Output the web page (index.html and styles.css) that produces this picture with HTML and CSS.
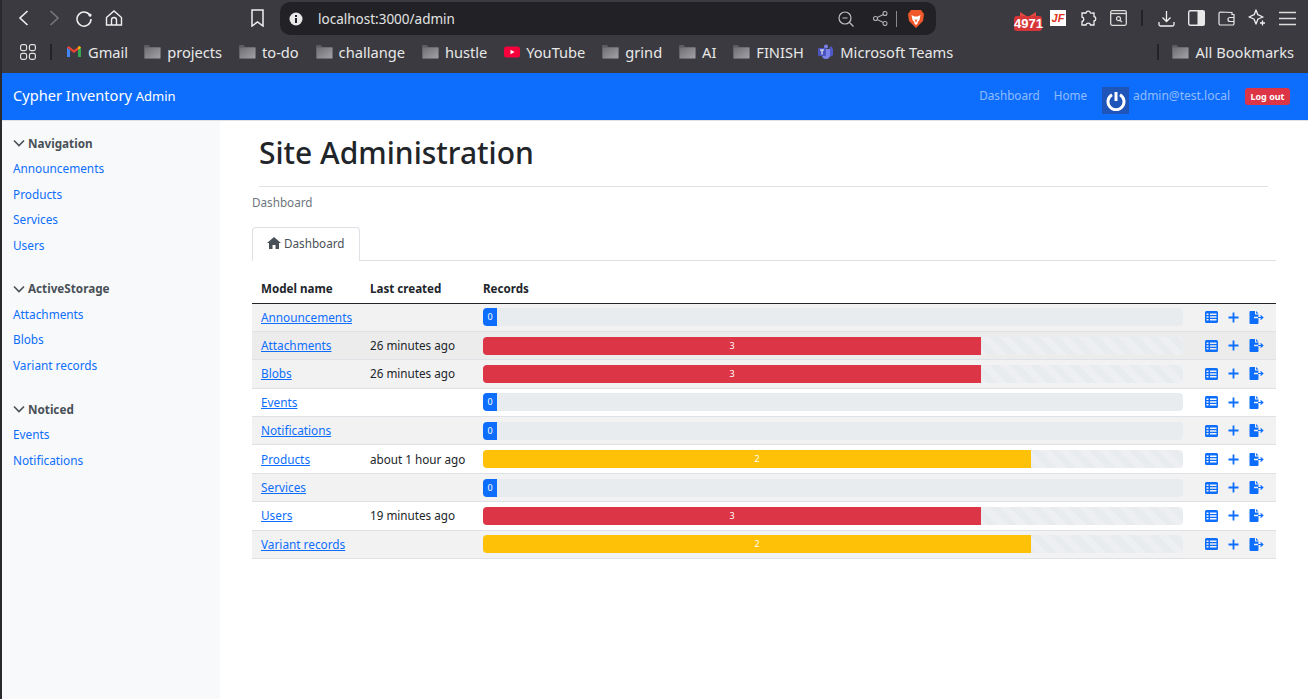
FILE: index.html
```html
<!DOCTYPE html>
<html lang="en">
<head>
<meta charset="utf-8">
<title>Site Administration</title>
<link rel="stylesheet" href="styles.css">
</head>
<body>
<svg class="defs" width="0" height="0" aria-hidden="true">
  <defs><linearGradient id="fg" x1="0" y1="0" x2="1" y2="1"><stop offset="0" stop-color="#6e6e73"/><stop offset="1" stop-color="#a2a2a6"/></linearGradient></defs>
  <symbol id="folder" viewBox="0 0 17 14"><path d="M0 1a1 1 0 0 1 1-1h4l1 2h10a1 1 0 0 1 1 1v10a1 1 0 0 1-1 1H1a1 1 0 0 1-1-1z" fill="#5c5c61"/><rect x=".7" y="2.500" width="15.600" height="10.800" rx=".8" fill="url(#fg)"/></symbol>
  <symbol id="tbl" viewBox="0 0 13 12"><path fill-rule="evenodd" d="M1.500 0h10A1.500 1.500 0 0 1 13 1.500v9a1.500 1.500 0 0 1-1.500 1.500h-10A1.500 1.500 0 0 1 0 10.500v-9A1.500 1.500 0 0 1 1.500 0zM1.500 2.500v1.500h2V2.500zM5 2.500v1.500h6.500V2.500zM1.500 5.200v1.600h2V5.200zM5 5.200v1.600h6.500V5.200zM1.500 8v1.500h2V8zM5 8v1.500h6.500V8z" fill="#0d6efd"/></symbol>
  <symbol id="plus" viewBox="0 0 11 11"><path d="M5.500 0.500v10M0.500 5.500h10" stroke="#0d6efd" stroke-width="1.800" fill="none"/></symbol>
  <symbol id="exp" viewBox="0 0 15 13"><path d="M0.500 1a1 1 0 0 1 1-1H6v3.500h3.500V5.700H5V7.300H9.500V12a1 1 0 0 1-1 1h-7a1 1 0 0 1-1-1z" fill="#0d6efd"/><path d="M7 0l2.500 2.500H7z" fill="#0d6efd"/><path d="M9 6.500h4.500M11.500 4.500l2.300 2-2.300 2" stroke="#0d6efd" stroke-width="1.200" fill="none"/></symbol>
  <symbol id="chev" viewBox="0 0 12 8"><path d="M1 1.500l5 5 5-5" stroke="#495057" stroke-width="1.600" fill="none"/></symbol>
</svg>

<div class="chrome">
  <div class="toolbar">
    <div class="tb-nav">
      <svg class="ic" width="18" height="18" viewBox="0 0 18 18"><path d="M12.500 2L5 9l7.500 7" stroke="#f0f0f0" stroke-width="1.600" fill="none"/></svg>
      <svg class="ic" width="18" height="18" viewBox="0 0 18 18"><path d="M5.500 2L13 9l-7.500 7" stroke="#77777b" stroke-width="1.600" fill="none"/></svg>
      <svg class="ic" width="18" height="18" viewBox="0 0 18 18"><path d="M15.500 7.500A7 7 0 1 0 16 10" stroke="#f0f0f0" stroke-width="1.500" fill="none"/><circle cx="15" cy="6" r="1.600" fill="#f0f0f0"/></svg>
      <svg class="ic" width="18" height="18" viewBox="0 0 18 18"><path d="M1.500 8.500L9 2l7.500 6.500V16h-15zM6.500 16v-5a2.500 2.500 0 0 1 5 0v5" stroke="#f0f0f0" stroke-width="1.400" fill="none"/></svg>
    </div>
    <svg class="bookmark" width="14" height="18" viewBox="0 0 14 18"><path d="M1 1h11v16l-5.500-4L1 17z" stroke="#f0f0f0" stroke-width="1.500" fill="none"/></svg>
    <div class="urlbar">
      <svg width="14" height="14" viewBox="0 0 14 14"><circle cx="7" cy="7" r="6.500" fill="#e8e8e8"/><rect x="6" y="6" width="2" height="5" fill="#222226"/><rect x="6" y="3" width="2" height="2" fill="#222226"/></svg>
      <span class="url">localhost:3000/admin</span>
      <svg class="zoom-ic" width="16" height="16" viewBox="0 0 16 16"><circle cx="7" cy="7" r="6" stroke="#c0c0c4" stroke-width="1.200" fill="none"/><path d="M4.500 7h5M11.500 11.500L15.500 15.500" stroke="#c0c0c4" stroke-width="1.200"/></svg>
      <svg class="share-ic" width="15" height="15" viewBox="0 0 15 15"><g stroke="#b0b0b4" stroke-width="1.100" fill="none"><circle cx="2.500" cy="7.500" r="2"/><circle cx="12" cy="2.500" r="2"/><circle cx="12" cy="12.500" r="2"/><path d="M4.300 6.500l6-3M4.300 8.500l6 3"/></g></svg>
      <span class="url-sep"></span>
      <svg class="brave" width="16" height="18" viewBox="0 0 16 18"><path d="M3 0h10l3 4-1 7-7 7-7-7-1-7z" fill="#f1592a"/><path d="M3.500 5l3 1.500h3l3-1.500-1 5-1.500 1.500-.5 2L8 15l-1.500-1.500-.5-2L4.500 10z" fill="#fff"/><path d="M6.500 9l1.500 1 1.500-1L8 13z" fill="#f1592a"/></svg>
    </div>
    <div class="ext">
      <div class="gm">
        <svg class="gm-env" width="16" height="6" viewBox="0 0 16 6"><path d="M0 0l8 5 8-5v6H0z" fill="#e04a3f"/></svg>
        <span class="gm-badge">4971</span>
      </div>
      <span class="jf">JF</span>
      <svg class="puzzle" width="17" height="17" viewBox="0 0 17 17"><path d="M6 3a2.300 2.300 0 0 1 4.500 0c0 .5 3.500 0 3.500 0v3.500a2.300 2.300 0 0 1 0 4.500V15H10.500a2.300 2.300 0 0 0-4.500 0H2v-3.500a2.300 2.300 0 0 0 0-4.500V3z" stroke="#f0f0f0" stroke-width="1.300" fill="none"/></svg>
      <svg class="tabsearch" width="17" height="16" viewBox="0 0 17 16"><rect x=".7" y=".7" width="15.600" height="14.600" rx="1.500" stroke="#dcdcdc" stroke-width="1.300" fill="none"/><path d="M1 3.500h15" stroke="#dcdcdc" stroke-width="1.300"/><circle cx="8.500" cy="8.700" r="2" stroke="#dcdcdc" stroke-width="1.200" fill="none"/><path d="M10 10.200l2 1.800" stroke="#dcdcdc" stroke-width="1.200"/></svg>
      <span class="sep"></span>
      <svg class="dl" width="17" height="17" viewBox="0 0 17 17"><path d="M8.500 1v10M4.500 7.500l4 4 4-4M1 12v2.500a1.500 1.500 0 0 0 1.500 1.500h12a1.500 1.500 0 0 0 1.500-1.500V12" stroke="#f0f0f0" stroke-width="1.300" fill="none"/></svg>
      <svg class="side" width="17" height="16" viewBox="0 0 17 16"><rect x=".7" y=".7" width="15.600" height="14.600" rx="1.500" stroke="#e8e8e8" stroke-width="1.400" fill="none"/><rect x="9.500" y="1" width="7" height="14" fill="#e8e8e8"/></svg>
      <svg class="wallet" width="17" height="15" viewBox="0 0 17 15"><path d="M14 3.500V1.500L2.500 1A1.500 1.500 0 0 0 1 2.500v10A1.500 1.500 0 0 0 2.500 14h12a1.500 1.500 0 0 0 1.500-1.500v-9zM16 6.500h-4a2 2 0 0 0 0 4h4" stroke="#e8e8e8" stroke-width="1.200" fill="none"/></svg>
      <svg class="leo" width="18" height="18" viewBox="0 0 18 18"><path d="M8 1l1.800 4.700L15 8l-5 2-2 5-2-5-5-2 5.200-2.300z" stroke="#f0f0f0" stroke-width="1.300" fill="none" stroke-linejoin="round"/><path d="M14.500 11.500v5M12 14h5" stroke="#f0f0f0" stroke-width="1.300"/></svg>
      <svg class="menu" width="17" height="15" viewBox="0 0 17 15"><path d="M0 1.500h17M0 7.500h17M0 13.500h17" stroke="#dcdcdc" stroke-width="1.700"/></svg>
    </div>
  </div>
  <div class="bookmarks">
    <svg class="apps" width="16" height="16" viewBox="0 0 16 16"><g stroke="#e0e0e0" stroke-width="1.200" fill="none"><rect x=".6" y=".6" width="6" height="6" rx="1.800"/><rect x="9.400" y=".6" width="6" height="6" rx="1.800"/><rect x=".6" y="9.400" width="6" height="6" rx="1.800"/><rect x="9.400" y="9.400" width="6" height="6" rx="1.800"/></g></svg>
    <span class="bm-sep"></span>
    <a class="bm bm-gmail"><svg width="14" height="11" viewBox="0 0 14 11"><path d="M0 1.500V11h3V4z" fill="#4285f4"/><path d="M14 1.500V11h-3V4z" fill="#34a853"/><path d="M0 1.500L7 7l7-5.500L12.500 0 7 4 1.500 0z" fill="#ea4335"/><path d="M11 4l3-2.500L12.500 0 11 1z" fill="#fbbc04"/></svg>Gmail</a>
    <a class="bm"><svg width="17" height="14"><use href="#folder"/></svg>projects</a>
    <a class="bm"><svg width="17" height="14"><use href="#folder"/></svg>to-do</a>
    <a class="bm"><svg width="17" height="14"><use href="#folder"/></svg>challange</a>
    <a class="bm"><svg width="17" height="14"><use href="#folder"/></svg>hustle</a>
    <a class="bm"><svg width="16" height="12" viewBox="0 0 16 12"><rect width="16" height="11" y=".5" rx="2.500" fill="#f6003c"/><path d="M6.500 3.800v4.400L10.500 6z" fill="#fff"/></svg>YouTube</a>
    <a class="bm"><svg width="17" height="14"><use href="#folder"/></svg>grind</a>
    <a class="bm"><svg width="17" height="14"><use href="#folder"/></svg>AI</a>
    <a class="bm bm-finish"><svg width="17" height="14"><use href="#folder"/></svg>FINISH</a>
    <a class="bm bm-teams"><svg width="15" height="15" viewBox="0 0 15 15"><circle cx="8" cy="2.500" r="2" fill="#7b83eb"/><circle cx="13" cy="4" r="1.500" fill="#5059c9"/><path d="M10 5h5v5a2.500 2.500 0 0 1-5 0z" fill="#5059c9"/><path d="M4 5h8v6a4 4 0 0 1-8 0z" fill="#7b83eb"/><rect y="4" width="8" height="8" rx="1" fill="#4b53bc"/><path d="M2 6h4M4 6v4.500" stroke="#fff"/></svg>Microsoft Teams</a>
    <span class="bm-sep bm-sep-right"></span>
    <a class="bm"><svg width="17" height="14"><use href="#folder"/></svg>All Bookmarks</a>
  </div>
</div>

<header class="navbar">
  <a class="brand">Cypher Inventory <small>Admin</small></a>
  <nav class="topnav">
    <a class="navlink">Dashboard</a>
    <a class="navlink">Home</a>
    <span class="user">
      <span class="avatar"><svg width="20" height="20" viewBox="0 0 20 20"><path d="M6 3.800a8 8 0 1 0 8 0" stroke="#fff" stroke-width="3" fill="none"/><path d="M10 1v9" stroke="#fff" stroke-width="3"/></svg></span>
      <a class="email">admin@test.local</a>
    </span>
    <a class="logout">Log out</a>
  </nav>
</header>

<div class="page">
  <aside class="sidebar">
    <h6><svg width="12" height="8"><use href="#chev"/></svg>Navigation</h6>
    <a>Announcements</a><a>Products</a><a>Services</a><a>Users</a>
    <h6 class="later"><svg width="12" height="8"><use href="#chev"/></svg>ActiveStorage</h6>
    <a>Attachments</a><a>Blobs</a><a>Variant records</a>
    <h6 class="later"><svg width="12" height="8"><use href="#chev"/></svg>Noticed</h6>
    <a>Events</a><a>Notifications</a>
  </aside>
  <main class="main">
    <h1>Site Administration</h1>
    <div class="crumb">Dashboard</div>
    <div class="tabs"><div class="tab"><svg width="14" height="12" viewBox="0 0 14 12"><path d="M7 0l7 6h-2v6H8.500V8h-3v4H2V6H0z" fill="#495057"/></svg>Dashboard</div></div>
    <table class="models">
      <thead><tr><th class="c-name">Model name</th><th class="c-last">Last created</th><th>Records</th><th class="c-act"></th></tr></thead>
      <tbody>
        <tr class="odd"><td><a>Announcements</a></td><td></td><td><div class="bar"><span class="fill zero">0</span></div></td><td class="acts"><svg width="13" height="12"><use href="#tbl"/></svg><svg width="11" height="11"><use href="#plus"/></svg><svg width="15" height="13"><use href="#exp"/></svg></td></tr>
        <tr class="hov"><td><a>Attachments</a></td><td>26 minutes ago</td><td><div class="bar striped"><span class="fill red" style="width:71.14%">3</span></div></td><td class="acts"><svg width="13" height="12"><use href="#tbl"/></svg><svg width="11" height="11"><use href="#plus"/></svg><svg width="15" height="13"><use href="#exp"/></svg></td></tr>
        <tr class="odd"><td><a>Blobs</a></td><td>26 minutes ago</td><td><div class="bar striped"><span class="fill red" style="width:71.14%">3</span></div></td><td class="acts"><svg width="13" height="12"><use href="#tbl"/></svg><svg width="11" height="11"><use href="#plus"/></svg><svg width="15" height="13"><use href="#exp"/></svg></td></tr>
        <tr><td><a>Events</a></td><td></td><td><div class="bar"><span class="fill zero">0</span></div></td><td class="acts"><svg width="13" height="12"><use href="#tbl"/></svg><svg width="11" height="11"><use href="#plus"/></svg><svg width="15" height="13"><use href="#exp"/></svg></td></tr>
        <tr class="odd"><td><a>Notifications</a></td><td></td><td><div class="bar"><span class="fill zero">0</span></div></td><td class="acts"><svg width="13" height="12"><use href="#tbl"/></svg><svg width="11" height="11"><use href="#plus"/></svg><svg width="15" height="13"><use href="#exp"/></svg></td></tr>
        <tr><td><a>Products</a></td><td>about 1 hour ago</td><td><div class="bar striped"><span class="fill yellow" style="width:78.29%">2</span></div></td><td class="acts"><svg width="13" height="12"><use href="#tbl"/></svg><svg width="11" height="11"><use href="#plus"/></svg><svg width="15" height="13"><use href="#exp"/></svg></td></tr>
        <tr class="odd"><td><a>Services</a></td><td></td><td><div class="bar"><span class="fill zero">0</span></div></td><td class="acts"><svg width="13" height="12"><use href="#tbl"/></svg><svg width="11" height="11"><use href="#plus"/></svg><svg width="15" height="13"><use href="#exp"/></svg></td></tr>
        <tr><td><a>Users</a></td><td>19 minutes ago</td><td><div class="bar striped"><span class="fill red" style="width:71.14%">3</span></div></td><td class="acts"><svg width="13" height="12"><use href="#tbl"/></svg><svg width="11" height="11"><use href="#plus"/></svg><svg width="15" height="13"><use href="#exp"/></svg></td></tr>
        <tr class="odd"><td><a>Variant records</a></td><td></td><td><div class="bar striped"><span class="fill yellow" style="width:78.29%">2</span></div></td><td class="acts"><svg width="13" height="12"><use href="#tbl"/></svg><svg width="11" height="11"><use href="#plus"/></svg><svg width="15" height="13"><use href="#exp"/></svg></td></tr>
      </tbody>
    </table>
  </main>
</div>
</body>
</html>
```
FILE: styles.css
```css
* { box-sizing: border-box; }
html, body { margin: 0; height: 100%; overflow: hidden; }
body { font-family: "Noto Sans", "Open Sans", sans-serif; font-size: 11.700px; color: #212529; background: #fff; display: flex; flex-direction: column; height: 699px; border-left: 2px solid #2a292d; }
.defs { position: absolute; }
svg { display: block; flex: none; }

.chrome { background: #3b3a40; height: 73px; flex: none; }
.toolbar { height: 36px; display: flex; align-items: center; }
.tb-nav { display: flex; align-items: center; gap: 12px; margin-left: 13px; }
.bookmark { margin-left: 128px; }
.urlbar { margin-left: 15px; width: 656px; height: 33px; background: #222226; border-radius: 10px; display: flex; align-items: center; padding-left: 9px; margin-top: 1px; }
.url { margin-left: 15px; color: #e3e3e3; font-size: 13.500px; }
.zoom-ic { margin-left: auto; }
.share-ic { margin-left: 19px; }
.url-sep { width: 1px; height: 16px; background: #8a8a8e; margin-left: 8px; }
.brave { margin-left: 11px; margin-right: 12px; }
.ext { display: flex; align-items: center; margin-left: 78px; }
.gm { position: relative; width: 28px; height: 28px; }
.gm-env { position: absolute; left: 6px; top: 8px; }
.gm-badge { position: absolute; left: 0; bottom: 1px; width: 28px; height: 15px; background: #d63638; border-radius: 3px; color: #fff; font: bold 13px/15px "Liberation Sans", sans-serif; text-align: center; }
.jf { width: 16px; height: 16px; background: #fff; color: #e0301e; font: italic bold 11px/16px "Liberation Sans", sans-serif; text-align: center; margin-left: 8px; }
.puzzle { margin-left: 14px; }
.tabsearch { margin-left: 13px; }
.sep { width: 2px; height: 16px; background: #232226; margin-left: 14px; }
.dl { margin-left: 15px; }
.side { margin-left: 13px; }
.wallet { margin-left: 13px; }
.leo { margin-left: 13px; }
.menu { margin-left: 13px; }

.bookmarks { height: 37px; display: flex; align-items: center; color: #e8e8e8; font-size: 14.650px; padding-left: 18px; padding-bottom: 6px; }
.apps { margin-right: 14px; }
.bm-sep { width: 2px; height: 16px; background: #232226; margin-right: 15px; }
.bm { display: flex; align-items: center; gap: 6px; margin-right: 16.900px; white-space: nowrap; }
.bm-gmail { gap: 7px; margin-right: 16px; }
.bm-finish { margin-right: 14.500px; }
.bm-teams { gap: 7px; }
.bm-sep-right { margin-left: auto; margin-right: 13px; }
.bm:last-child { margin-right: 14px; }

.navbar { height: 47px; flex: none; background: #0d6efd; display: flex; align-items: center; justify-content: space-between; padding: 0 18px 0 11px; }
.brand { color: #fff; font-size: 14.600px; padding-bottom: 3px; }
.brand small { font-size: 13px; }
.topnav { display: flex; align-items: center; }
.topnav a { color: rgba(255,255,255,.55); }
.topnav a.navlink { margin-right: 15px; padding-bottom: 3px; }
.topnav a.navlink:first-child { margin-right: 14px; }
.user { display: flex; align-items: flex-start; margin-right: 15px; }
.avatar { width: 27px; height: 27px; background: #1f55b8; display: flex; align-items: center; justify-content: center; margin-right: 4px; margin-top: 8px; }
.email { font-size: 12px; line-height: 16px; margin-top: 9px; }
.topnav a.logout { background: #dc3545; color: #fff; font-size: 9px; font-weight: 700; border-radius: 3px; width: 45px; height: 17px; line-height: 17px; text-align: center; }

.page { flex: 1; display: flex; min-height: 0; border-top: 1px solid #dee2e6; }
.sidebar { width: 218px; flex: none; background: #f8f9fa; padding: 13.500px 13px 16px 11px; display: flex; flex-direction: column; align-items: flex-start; }
.sidebar h6 { margin: 0; font-size: 11.700px; font-weight: 700; color: #495057; line-height: 17px; height: 17px; display: flex; align-items: center; gap: 3px; }
.sidebar h6.later { margin-top: 26.900px; }
.sidebar a { color: #0d6efd; font-size: 11.800px; line-height: 17px; margin-top: 8.500px; }

.main { flex: 1; min-width: 0; padding: 0 32px; }
.main h1 { margin: 0 8px 0 7px; font-size: 30px; font-weight: 500; line-height: 38px; height: 66px; padding-top: 13px; border-bottom: 1px solid #dee2e6; color: #212529; }
.crumb { color: #6c757d; margin-top: 7px; line-height: 17px; }
.tabs { margin-top: 16px; border-bottom: 1px solid #dee2e6; height: 34px; }
.tab { width: 108px; height: 34px; background: #fff; border: 1px solid #dee2e6; border-bottom: 0; border-radius: 4px 4px 0 0; display: flex; align-items: center; gap: 3px; padding: 0 0 4px 14px; color: #495057; }
.models { width: 100%; border-collapse: collapse; margin-top: 9px; table-layout: fixed; }
.models th { text-align: left; font-weight: 700; font-size: 11.600px; height: 33px; padding: 4px 9px 0; border-bottom: 1px solid #212529; }
.c-name { width: 109px; }
.c-last { width: 113px; }
.c-act { width: 84px; }
.models td { height: 28.400px; padding: 0 9px; border-bottom: 1px solid #dee2e6; white-space: nowrap; }
.models td:nth-child(-n+2) { padding-bottom: 1px; }
.models td a { color: #0d6efd; text-decoration: underline; font-size: 11.800px; }
.models tr.odd td { background: #f2f2f2; }
.models tr.hov td { background: #ececec; }
.bar { height: 18px; background-color: #e9ecef; border-radius: 4px; overflow: hidden; display: flex; }
.bar.striped { background-image: repeating-linear-gradient(45deg, #edeff2 0 7px, #e9ecef 7px 14px); }
.fill { display: block; color: #fff; font-size: 9px; line-height: 18px; text-align: center; }
.fill.zero { width: 14px; background: #0d6efd; }
.fill.red { background: #dc3545; }
.fill.yellow { background: #ffc107; }
.models td.acts { padding: 0 0 0 3px; font-size: 0; }
.models td.acts svg { display: inline-block; vertical-align: middle; margin-left: 10px; }
```
